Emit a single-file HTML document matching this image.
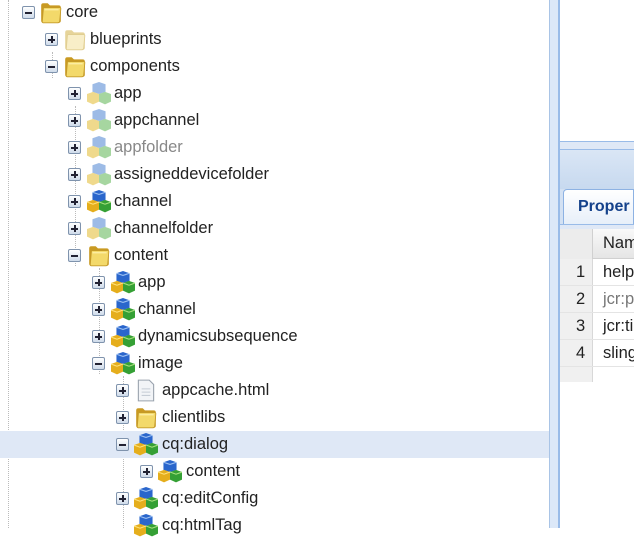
<!DOCTYPE html>
<html><head><style>
*{margin:0;padding:0;box-sizing:border-box}
body{width:634px;height:528px;overflow:hidden;background:#fff;font-family:"Liberation Sans",Arial,sans-serif;position:relative}
.row{position:absolute;left:0;width:549px;height:27px}
.sel{background:#dfe8f6}
.ex{position:absolute;top:7px;width:13px;height:13px;border:1px solid #7f93ad;background:linear-gradient(#fff,#cfdbea);border-radius:2px}
.ex:before{content:"";position:absolute;left:2px;top:5px;width:7px;height:1.5px;background:#223}
.ex.p:after{content:"";position:absolute;left:5px;top:2px;width:1.5px;height:7px;background:#223}
.ic{position:absolute;top:2px;width:24px;height:23px}
.t{position:absolute;top:4px;font-size:16.5px;color:#222;white-space:nowrap}
.vl{position:absolute;width:0;border-left:1px dotted #bbb}
</style></head><body>
<svg width="0" height="0" style="position:absolute">
<defs>
<symbol id="fold" viewBox="0 0 22 21"><path d="M2 4q0-2 2-2h4l2 2h8q2 0 2 2v12q0 2-2 2H4q-2 0-2-2z" fill="#c99a22"/><path d="M4 7q0-1 1-1h14q1 0 1 1l-1 11q0 2-2 2H4q-1 0-1-1z" fill="#f3d96a" stroke="#c49a2a" stroke-width=".8"/><path d="M5 8h13" stroke="#fff3b0"/></symbol>
<symbol id="pfold" viewBox="0 0 22 21"><path d="M2 4q0-2 2-2h4l2 2h8q2 0 2 2v12q0 2-2 2H4q-2 0-2-2z" fill="#e6d49a"/><path d="M4 7q0-1 1-1h14q1 0 1 1l-1 11q0 2-2 2H4q-1 0-1-1z" fill="#f8eec8" stroke="#e0cd90" stroke-width=".8"/></symbol>
<symbol id="comp" viewBox="0 0 22 21"><path d="M5 2l6-2 6 2v7l-6 2-6-2z" fill="#2a66cc"/><path d="M5 2l6 2 6-2" stroke="#9cc0f2" fill="none"/><path d="M0 11l5.5-2 5.5 2v7l-5.5 2.5L0 18z" fill="#e5ae1c"/><path d="M11 11l5.5-2 5.5 2v7l-5.5 2.5L11 18z" fill="#35a035"/><path d="M11 11l5.5 2 5.5-2" stroke="#a8e07e" fill="none"/><path d="M0 11l5.5 2 5.5-2" stroke="#ffe27a" fill="none"/></symbol>
<symbol id="pcomp" viewBox="0 0 22 21"><path d="M5 2l6-2 6 2v7l-6 2-6-2z" fill="#9dbbe6"/><path d="M0 11l5.5-2 5.5 2v7l-5.5 2.5L0 18z" fill="#efd98c"/><path d="M11 11l5.5-2 5.5 2v7l-5.5 2.5L11 18z" fill="#a6d6a0"/></symbol>
<symbol id="file" viewBox="0 0 22 21"><path d="M4 1h10l4 4v15H4z" fill="#f2f4f7" stroke="#9aa3ae"/><path d="M7 9h8M7 12h8M7 15h8" stroke="#c5ccd5"/></symbol>
</defs></svg>

<div class="vl" style="left:8px;top:0;height:528px"></div>
<div class="vl" style="left:52px;top:52px;height:26px"></div>
<div class="vl" style="left:75px;top:106px;height:160px"></div>
<div class="vl" style="left:99px;top:268px;height:106px"></div>
<div class="vl" style="left:123px;top:376px;height:152px"></div>

<div class="row" style="top:-1px"><div class="ex" style="left:22px"></div><svg class="ic" style="left:39px" viewBox="0 0 22 21"><use href="#fold" width="22" height="21"/></svg><div class="t" style="left:66px">core</div></div>
<div class="row" style="top:26px"><div class="ex p" style="left:45px"></div><svg class="ic" style="left:63px" viewBox="0 0 22 21"><use href="#pfold" width="22" height="21"/></svg><div class="t" style="left:90px">blueprints</div></div>
<div class="row" style="top:53px"><div class="ex" style="left:45px"></div><svg class="ic" style="left:63px" viewBox="0 0 22 21"><use href="#fold" width="22" height="21"/></svg><div class="t" style="left:90px">components</div></div>
<div class="row" style="top:80px"><div class="ex p" style="left:68px"></div><svg class="ic" style="left:87px" viewBox="0 0 22 21"><use href="#pcomp" width="22" height="21"/></svg><div class="t" style="left:114px">app</div></div>
<div class="row" style="top:107px"><div class="ex p" style="left:68px"></div><svg class="ic" style="left:87px" viewBox="0 0 22 21"><use href="#pcomp" width="22" height="21"/></svg><div class="t" style="left:114px">appchannel</div></div>
<div class="row" style="top:134px"><div class="ex p" style="left:68px"></div><svg class="ic" style="left:87px" viewBox="0 0 22 21"><use href="#pcomp" width="22" height="21"/></svg><div class="t" style="left:114px;color:#888">appfolder</div></div>
<div class="row" style="top:161px"><div class="ex p" style="left:68px"></div><svg class="ic" style="left:87px" viewBox="0 0 22 21"><use href="#pcomp" width="22" height="21"/></svg><div class="t" style="left:114px">assigneddevicefolder</div></div>
<div class="row" style="top:188px"><div class="ex p" style="left:68px"></div><svg class="ic" style="left:87px" viewBox="0 0 22 21"><use href="#comp" width="22" height="21"/></svg><div class="t" style="left:114px">channel</div></div>
<div class="row" style="top:215px"><div class="ex p" style="left:68px"></div><svg class="ic" style="left:87px" viewBox="0 0 22 21"><use href="#pcomp" width="22" height="21"/></svg><div class="t" style="left:114px">channelfolder</div></div>
<div class="row" style="top:242px"><div class="ex" style="left:68px"></div><svg class="ic" style="left:87px" viewBox="0 0 22 21"><use href="#fold" width="22" height="21"/></svg><div class="t" style="left:114px">content</div></div>
<div class="row" style="top:269px"><div class="ex p" style="left:92px"></div><svg class="ic" style="left:111px" viewBox="0 0 22 21"><use href="#comp" width="22" height="21"/></svg><div class="t" style="left:138px">app</div></div>
<div class="row" style="top:296px"><div class="ex p" style="left:92px"></div><svg class="ic" style="left:111px" viewBox="0 0 22 21"><use href="#comp" width="22" height="21"/></svg><div class="t" style="left:138px">channel</div></div>
<div class="row" style="top:323px"><div class="ex p" style="left:92px"></div><svg class="ic" style="left:111px" viewBox="0 0 22 21"><use href="#comp" width="22" height="21"/></svg><div class="t" style="left:138px">dynamicsubsequence</div></div>
<div class="row" style="top:350px"><div class="ex" style="left:92px"></div><svg class="ic" style="left:111px" viewBox="0 0 22 21"><use href="#comp" width="22" height="21"/></svg><div class="t" style="left:138px">image</div></div>
<div class="row" style="top:377px"><div class="ex p" style="left:116px"></div><svg class="ic" style="left:134px" viewBox="0 0 22 21"><use href="#file" width="22" height="21"/></svg><div class="t" style="left:162px">appcache.html</div></div>
<div class="row" style="top:404px"><div class="ex p" style="left:116px"></div><svg class="ic" style="left:134px" viewBox="0 0 22 21"><use href="#fold" width="22" height="21"/></svg><div class="t" style="left:162px">clientlibs</div></div>
<div class="row sel" style="top:431px"><div class="ex" style="left:116px"></div><svg class="ic" style="left:134px" viewBox="0 0 22 21"><use href="#comp" width="22" height="21"/></svg><div class="t" style="left:162px">cq:dialog</div></div>
<div class="row" style="top:458px"><div class="ex p" style="left:140px"></div><svg class="ic" style="left:158px" viewBox="0 0 22 21"><use href="#comp" width="22" height="21"/></svg><div class="t" style="left:186px">content</div></div>
<div class="row" style="top:485px"><div class="ex p" style="left:116px"></div><svg class="ic" style="left:134px" viewBox="0 0 22 21"><use href="#comp" width="22" height="21"/></svg><div class="t" style="left:162px">cq:editConfig</div></div>
<div class="row" style="top:512px"><svg class="ic" style="left:134px" viewBox="0 0 22 21"><use href="#comp" width="22" height="21"/></svg><div class="t" style="left:162px">cq:htmlTag</div></div>

<div style="position:absolute;left:549px;top:0;width:11px;height:528px;background:#dce8f8;border-left:1px solid #a9c4e6;border-right:2px solid #99bbe8"></div>
<div style="position:absolute;left:560px;top:0;width:74px;height:142px;background:#fff;border-bottom:1px solid #99bbe8"></div>
<div style="position:absolute;left:560px;top:142px;width:74px;height:7px;background:#dfe8f6"></div>
<div style="position:absolute;left:560px;top:149px;width:74px;height:40px;background:linear-gradient(#dae6f5,#c7d9ef);border-top:1px solid #99bbe8"></div>
<div style="position:absolute;left:560px;top:189px;width:74px;height:40px;background:#d3e1f3"></div>
<div style="position:absolute;left:563px;top:189px;width:71px;height:35px;background:linear-gradient(#fff,#e7eff9);border:1px solid #8db2e3;border-bottom:none;border-radius:4px 0 0 0;font-weight:bold;font-size:16px;color:#15428b;padding:8px 0 0 14px">Proper</div>
<div style="position:absolute;left:560px;top:224px;width:74px;height:5px;background:#dfe8f6;border-top:1px solid #99bbe8"></div>
<div style="position:absolute;left:560px;top:229px;width:74px;height:153px;background:#fff"></div>
<div style="position:absolute;left:560px;top:229px;width:74px;height:30px;background:linear-gradient(#f9f9f9,#e5e5e5);border-bottom:1px solid #d0d0d0"></div>
<div style="position:absolute;left:560px;top:229px;width:33px;height:30px;background:#ececec;border-right:1px solid #d0d0d0"></div>
<div style="position:absolute;left:603px;top:234px;font-size:16.5px;color:#222">Name</div>
<div style="position:absolute;left:560px;top:259px;width:33px;height:123px;background:#f0f0f0;border-right:1px solid #d8d8d8"></div>
<div style="position:absolute;left:560px;top:259px;width:74px;font-size:16.5px;color:#222">
<div style="height:27px;border-bottom:1px solid #e4e4e4;position:relative"><span style="position:absolute;left:16px;top:4px">1</span><span style="position:absolute;left:43px;top:4px">help</span></div>
<div style="height:27px;border-bottom:1px solid #e4e4e4;position:relative"><span style="position:absolute;left:16px;top:4px">2</span><span style="position:absolute;left:43px;top:4px;color:#777">jcr:p</span></div>
<div style="height:27px;border-bottom:1px solid #e4e4e4;position:relative"><span style="position:absolute;left:16px;top:4px">3</span><span style="position:absolute;left:43px;top:4px">jcr:ti</span></div>
<div style="height:27px;border-bottom:1px solid #e4e4e4;position:relative"><span style="position:absolute;left:16px;top:4px">4</span><span style="position:absolute;left:43px;top:4px">sling</span></div>
</div>
</body></html>
